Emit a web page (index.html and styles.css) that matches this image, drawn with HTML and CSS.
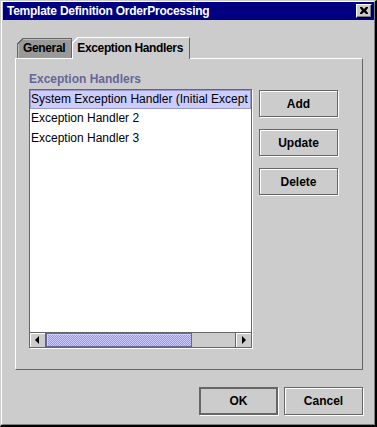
FILE: index.html
```html
<!DOCTYPE html>
<html lang="en">
<head>
    <meta charset="UTF-8">
    <meta name="viewport" content="width=device-width, initial-scale=1.0">
    <title>Template Definition OrderProcessing</title>
    <link rel="stylesheet" href="styles.css">
</head>
<body>
    <div class="window">
        <div class="frame">
            <div class="titlebar">
                <span class="title">Template Definition OrderProcessing</span>
                <button class="close">
                    <svg width="8" height="7" viewBox="0 0 8 7">
                        <path d="M0 0h2l2 2 2-2h2v1l-2 2.5 2 2.5v1h-2l-2-2-2 2h-2v-1l2-2.5-2-2.5z" fill="#000"/>
                    </svg>
                </button>
            </div>
            <div class="content">
                <div class="tabs">
                    <div class="tab">General</div>
                    <div class="tab active">Exception Handlers</div>
                </div>
                <div class="panel">
                    <div class="group-label">Exception Handlers</div>
                    <div class="group-row">
                        <div class="list">
                            <ul class="items">
                                <li class="selected">System Exception Handler (Initial Except</li>
                                <li>Exception Handler 2</li>
                                <li>Exception Handler 3</li>
                            </ul>
                            <div class="hscroll">
                                <span class="arrow arrow-left"></span>
                                <span class="track"><span class="thumb"></span></span>
                                <span class="arrow arrow-right"></span>
                            </div>
                        </div>
                        <div class="side-buttons">
                            <button class="btn">Add</button>
                            <button class="btn">Update</button>
                            <button class="btn">Delete</button>
                        </div>
                    </div>
                </div>
                <div class="footer">
                    <button class="btn default">OK</button>
                    <button class="btn">Cancel</button>
                </div>
            </div>
        </div>
    </div>
</body>
</html>
```

FILE: styles.css
```css
*{
    margin:0;
    padding:0;
    box-sizing:border-box;
}
body{
    background:#cccccc;
    font-family:"Liberation Sans", Arial, sans-serif;
    font-size:12px;
}
.window{
    width:377px;
    height:427px;
    border:1px solid #cccccc;
    border-right:2px solid #000;
    border-bottom:2px solid #000;
    background:#cccccc;
}
.frame{
    height:100%;
    border-top:1px solid #fff;
    border-left:1px solid #fff;
    border-right:1px solid #808080;
    border-bottom:1px solid #808080;
    padding-left:1px;
    display:flex;
    flex-direction:column;
}
.titlebar{
    height:18px;
    background:#000080;
    display:flex;
    align-items:center;
    justify-content:space-between;
    padding:0 2px 0 4px;
}
.title{
    color:#fff;
    font-weight:bold;
    font-size:12px;
    letter-spacing:-0.25px;
}
.close{
    width:16px;
    height:14px;
    background:#cccccc;
    border:1px solid;
    border-color:#fff #000 #000 #fff;
    box-shadow:inset -1px -1px #808080;
    display:flex;
    align-items:center;
    justify-content:center;
    padding-bottom:1px;
}
.close svg{
    display:block;
}
.content{
    flex:1;
    padding:17px 11px 0 12px;
    display:flex;
    flex-direction:column;
}
.tabs{
    display:flex;
    align-items:flex-end;
    padding-left:2px;
    height:21px;
}
.tab{
    position:relative;
    height:20px;
    padding:0 6px 0 5px;
    line-height:19px;
    font-weight:bold;
    letter-spacing:-0.35px;
    color:#000;
    background:#999999;
    border:1px solid #666666;
    border-bottom:none;
    box-shadow:inset 1px 1px #bbbbbb;
}
.tab::before{
    content:'';
    position:absolute;
    left:-1px;
    top:-1px;
    width:6px;
    height:6px;
    background:linear-gradient(135deg, #cccccc 0 45%, #666666 45% 62%, transparent 62%);
}
.tab.active{
    height:22px;
    margin-bottom:-1px;
    z-index:1;
    padding:0 6px 0 4px;
    line-height:21px;
    background:#cccccc;
    border-color:#fff #666666 #cccccc #fff;
    box-shadow:none;
}
.tab.active::before{
    background:linear-gradient(135deg, #cccccc 0 45%, #fff 45% 62%, transparent 62%);
}
.panel{
    height:312px;
    border:1px solid;
    border-color:#fff #666666 #666666 #fff;
    padding:13px 0 0 13px;
}
.group-label{
    color:#666699;
    font-weight:bold;
    line-height:15px;
    margin-bottom:2px;
}
.group-row{
    display:flex;
    gap:7px;
    align-items:flex-start;
}
.list{
    width:223px;
    height:259px;
    border:1px solid #666666;
    box-shadow:1px 1px #fff;
    background:#fff;
    display:flex;
    flex-direction:column;
}
.items{
    flex:1;
    list-style:none;
    overflow:hidden;
}
.items li{
    height:20px;
    line-height:17px;
    padding-left:1px;
    white-space:nowrap;
    overflow:hidden;
    color:#000;
}
.items li.selected{
    height:19px;
    margin-bottom:1px;
    background:#ccccff;
    border:1px solid #9999cc;
    padding-left:0;
    line-height:16px;
}
.hscroll{
    height:15px;
    display:flex;
    border-top:1px solid #666666;
    background:#cccccc;
}
.arrow{
    width:16px;
    position:relative;
    background:#cccccc;
    border-right:1px solid #666666;
    box-shadow:inset 1px 1px #fff;
}
.arrow-right{
    border-right:none;
    border-left:1px solid #666666;
}
.arrow::after{
    content:'';
    position:absolute;
    top:3px;
    left:5px;
    border-top:4px solid transparent;
    border-bottom:4px solid transparent;
}
.arrow-left::after{
    border-right:4px solid #000;
}
.arrow-right::after{
    left:6px;
    border-left:4px solid #000;
}
.track{
    flex:1;
    display:flex;
}
.thumb{
    width:146px;
    border:1px solid #666699;
    background:repeating-conic-gradient(#ccccff 0 25%, #9999cc 0 50%) 0 0/2px 2px;
    box-shadow:inset 1px 1px #ccccff;
}
.side-buttons{
    display:flex;
    flex-direction:column;
    gap:12px;
    margin-top:1px;
}
.btn{
    width:79px;
    height:27px;
    background:#cccccc;
    border:1px solid #666666;
    box-shadow:inset 1px 1px #fff, 1px 1px #fff;
    font-family:"Liberation Sans", Arial, sans-serif;
    font-size:12px;
    font-weight:bold;
    color:#000;
}
.footer{
    margin-top:17px;
    display:flex;
    justify-content:flex-end;
    gap:6px;
}
.footer .btn{
    height:28px;
    width:79px;
}
.btn.default{
    border:2px solid #666666;
    box-shadow:1px 1px #fff;
}
```
